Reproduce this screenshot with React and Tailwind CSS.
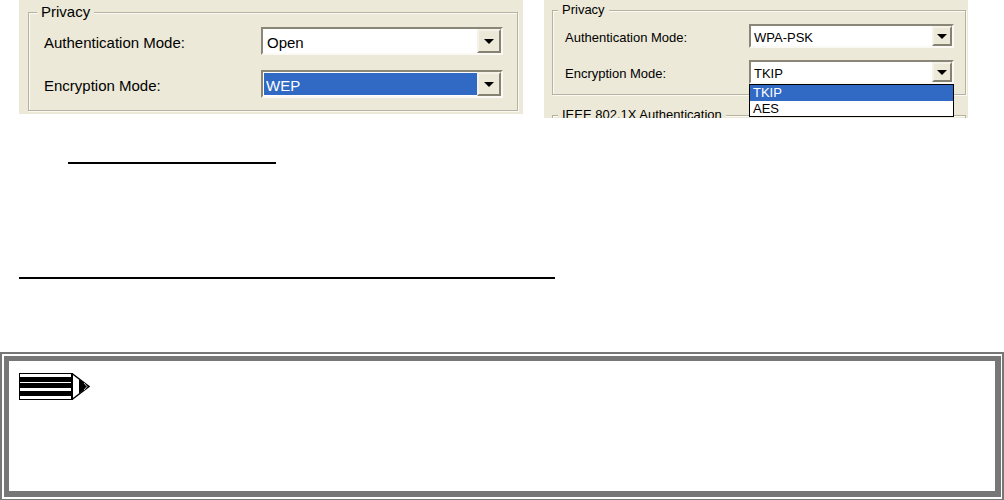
function Combo({ id, value, options, selected, large, open }) {
  return (
    <div
      className={
        "relative flex items-stretch border-2 border-t-[#8a8779] border-l-[#8a8779] border-r-[#faf9f4] border-b-[#faf9f4] bg-white " +
        (large ? "h-7 text-[15px]" : "h-6 text-[13px]")
      }
    >
      <select
        id={id}
        defaultValue={value}
        className={
          "min-w-0 flex-1 appearance-none pt-0.5 outline-none " +
          (large ? "mr-6 my-px ml-px " : "mr-5 ") +
          (selected ? "bg-[#316ac5] pl-0.5 text-white" : "bg-white pl-[3px] text-black")
        }
      >
        {options.map((o) => (
          <option key={o}>{o}</option>
        ))}
      </select>
      <span
        aria-hidden="true"
        className={
          "pointer-events-none absolute inset-y-0 right-0 flex items-center justify-center border-2 border-t-[#f5f3e8] border-l-[#f5f3e8] border-r-[#858173] border-b-[#858173] bg-[#ece9d8] " +
          (large ? "w-6" : "w-5")
        }
      >
        <svg width="10" height="5" viewBox="0 0 10 5">
          <path d="M0 0H10L5 5Z" fill="#000" />
        </svg>
      </span>
      {open && (
        <ul
          role="listbox"
          aria-label="Encryption Mode options"
          className="absolute -inset-x-0.5 top-[22px] z-10 border border-black bg-white text-[13px] leading-[15px]"
        >
          {options.map((o) => (
            <li
              key={o}
              role="option"
              aria-selected={o === value}
              className={o === value ? "bg-[#316ac5] pb-px pl-[3px] text-white" : "pl-[3px]"}
            >
              {o}
            </li>
          ))}
        </ul>
      )}
    </div>
  );
}

const frame =
  "min-w-0 border border-[#b5b2a2] shadow-[1px_1px_0_#fbfaf5,inset_1px_1px_0_#fbfaf5]";

export default function App() {
  return (
    <main className="flex min-h-screen flex-col bg-white font-['Liberation_Sans',Arial,sans-serif] text-black">
      <div className="grid grid-cols-[504fr_424fr] items-start gap-[21px] pl-[19px] pr-9">
        <section className="bg-[#ece9d8] pt-[3px] pr-[5px] pb-[3px] pl-[9px] text-[15px]">
          <fieldset className={frame}>
            <legend className="ml-2 bg-[#ece9d8] px-1 leading-[18px]">Privacy</legend>
            <div className="grid grid-cols-[217px_1fr] items-center gap-y-[15px] pt-1.5 pr-3.5 pb-3 pl-[15px]">
              <label className="pt-1" htmlFor="auth-a">Authentication Mode:</label>
              <Combo id="auth-a" value="Open" options={["Open", "Shared", "WPA-PSK"]} large />
              <label className="pt-1" htmlFor="enc-a">Encryption Mode:</label>
              <Combo id="enc-a" value="WEP" options={["WEP", "None"]} large selected />
            </div>
          </fieldset>
        </section>

        <section className="bg-[#ece9d8] pt-[2px] pr-[2px] pl-2 text-[13px]">
          <fieldset className={frame}>
            <legend className="ml-[5px] bg-[#ece9d8] px-1 leading-4">Privacy</legend>
            <div className="grid grid-cols-[184px_1fr] items-center gap-y-3 pt-1.5 pr-[11px] pb-2.5 pl-3">
              <label className="pt-1" htmlFor="auth-b">Authentication Mode:</label>
              <Combo id="auth-b" value="WPA-PSK" options={["WPA-PSK", "Open", "Shared"]} />
              <label className="pt-1" htmlFor="enc-b">Encryption Mode:</label>
              <Combo id="enc-b" value="TKIP" options={["TKIP", "AES"]} open />
            </div>
          </fieldset>
          <div className="mt-3 h-[11px] overflow-hidden">
            <fieldset className={frame}>
              <legend className="ml-[5px] bg-[#ece9d8] px-1 leading-4">
                IEEE 802.1X Authentication
              </legend>
            </fieldset>
          </div>
        </section>
      </div>

      <hr className="mt-11 ml-[68px] w-52 border-t-2 border-black" />
      <hr className="mt-[113px] ml-[19px] w-[536px] border-t-2 border-black" />

      <aside className="mt-[73px] flex flex-1 border-2 border-b border-[#777] bg-white pt-0.5 pr-px pb-0.5 pl-0.5">
        <div className="flex-1 border-[5px] border-r-[6px] border-b-[6px] border-[#777] pt-[11px] pl-[10px]">
          <svg width="72" height="29" viewBox="0 0 72 29" role="img" aria-label="Note">
            <path d="M53 1.5L70 14.5L53 27.5" fill="#fff" stroke="#000" strokeWidth="1.5" />
            <path d="M60 7L70 14.5L60 21.5Z" fill="#000" />
            <path d="M65 11L68 14.5L65 18" fill="none" stroke="#fff" strokeWidth="0.8" />
            <rect x="0.5" y="1.5" width="53" height="26" fill="#fff" stroke="#000" />
            <rect x="52" y="1" width="2" height="27" />
            <rect x="1" y="5" width="52" height="5" />
            <rect x="1" y="11" width="52" height="5" />
            <rect x="1" y="19" width="52" height="5" />
          </svg>
        </div>
      </aside>
    </main>
  );
}
